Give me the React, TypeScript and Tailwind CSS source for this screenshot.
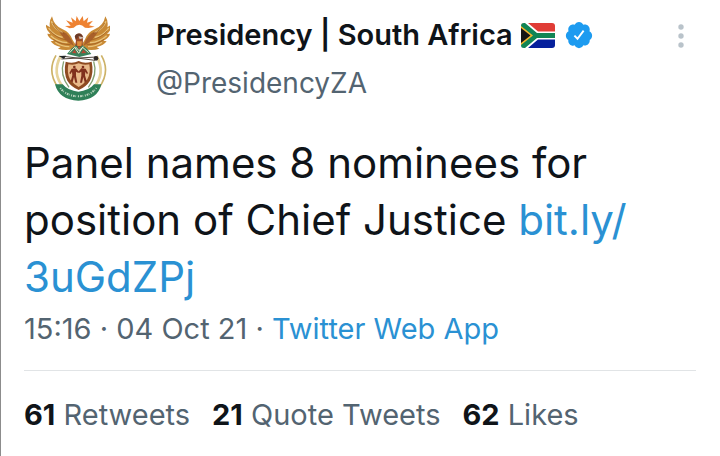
interface StatProps {
  count: number;
  label: string;
}

const stats: StatProps[] = [
  { count: 61, label: 'Retweets' },
  { count: 21, label: 'Quote Tweets' },
  { count: 62, label: 'Likes' },
];

function CoatOfArms() {
  return (
    <svg
      className="h-[86px] w-16"
      viewBox="48 45 192 258"
      role="img"
      aria-label="Coat of arms of South Africa"
    >
      {/* rising sun */}
      <path
        d="M105 78 L122 77 L108 61 L128 68 L123 52 L137 64 L140 48 L148 63 L158 48 L161 64 L175 52 L171 68 L189 62 L177 76 L194 80 L176 84 L165 83 Q148 66 131 83 L119 85 Z"
        fill="#ee8232"
      />
      {/* tusks and wheat */}
      <path d="M78 166 Q50 214 84 262" fill="none" stroke="#cdb267" strokeWidth="5" />
      <path d="M214 166 Q242 214 208 262" fill="none" stroke="#cdb267" strokeWidth="5" />
      <path d="M92 168 Q64 220 101 263" fill="none" stroke="#e6d39a" strokeWidth="8" />
      <path d="M200 168 Q228 220 191 263" fill="none" stroke="#e6d39a" strokeWidth="8" />
      <path d="M101 184 Q88 224 117 262" fill="none" stroke="#83a071" strokeWidth="4" />
      <path d="M191 184 Q204 224 175 262" fill="none" stroke="#83a071" strokeWidth="4" />
      {/* wings */}
      <g id="wing">
        <path
          d="M66 49 Q72 78 98 88 Q120 97 128 120 L138 136 L130 147 Q106 154 84 146 L92 141 Q70 136 62 124 L72 122 Q54 113 52 101 L61 102 Q46 88 48 74 L60 82 Q56 64 66 49 Z"
          fill="#c98a35"
        />
        <path d="M86 92 Q110 94 124 119 L132 138 Q104 124 86 92 Z" fill="#a9602a" />
        <path
          d="M64 64 Q72 87 98 98 M56 84 Q70 106 98 112 M62 107 Q82 126 112 128 M76 127 Q94 140 118 140"
          fill="none"
          stroke="#e9c47c"
          strokeWidth="4"
        />
        <path
          d="M68 69 Q78 91 104 102 M60 92 Q76 113 108 120 M70 118 Q90 134 122 134"
          fill="none"
          stroke="#985620"
          strokeWidth="2"
        />
      </g>
      <use href="#wing" transform="matrix(-1 0 0 1 292 0)" />
      {/* head and breast of the bird */}
      <path d="M134 142 L138 122 Q130 106 142 101 Q157 98 159 112 L158 142 Z" fill="#9c4a25" />
      <path d="M134 110 Q139 98 152 101 L160 110 L146 109 L140 118 Z" fill="#6b3b28" />
      <path d="M146 109 L164 113 L149 118 Z" fill="#cfc3ba" />
      <path d="M141 124 L156 124 L154 138 L142 138 Z" fill="#dd8c3c" />
      {/* protea */}
      <path d="M111 162 L124 146 L138 136 L148 143 L158 136 L171 146 L184 162 L148 171 Z" fill="#39805a" />
      <path
        d="M119 158 L134 142 L146 160 L158 142 L176 158 M136 140 L147 152 L160 140"
        fill="none"
        stroke="#f5ecd2"
        strokeWidth="3"
      />
      <path d="M126 159 L134 149 L140 160 Z M153 160 L160 149 L169 159 Z M143 142 L147 148 L152 142 Z" fill="#b84732" />
      {/* spear and knobkierie */}
      <path d="M94 177 L199 171 M101 169 L195 181" stroke="#51443a" strokeWidth="3" />
      <path d="M86 168 L108 167 L102 177 Z" fill="#222525" />
      <circle cx="198" cy="175" r="7" fill="#2d2725" />
      {/* shield */}
      <path
        d="M107 185 Q128 192 146 183 Q163 192 185 185 Q192 218 180 242 Q169 260 146 270 Q123 260 112 242 Q100 218 107 185 Z"
        fill="#8e4b22"
      />
      <path
        d="M115 193 Q132 197 146 190 Q161 197 178 193 Q183 219 172 238 Q162 252 146 261 Q130 252 120 238 Q110 219 115 193 Z"
        fill="#e8b98a"
      />
      <g fill="#80301d">
        <circle cx="133" cy="201" r="4" />
        <circle cx="159" cy="201" r="4" />
        <path d="M125 206 L138 205 L147 215 L145 219 L138 215 L138 227 L142 248 L136 248 L132 231 L128 247 L122 244 L127 226 L126 215 L121 223 L118 219 Z" />
        <path d="M167 206 L154 205 L145 215 L147 219 L154 215 L154 227 L150 248 L156 248 L160 231 L164 247 L170 244 L165 226 L166 215 L171 223 L174 219 Z" />
      </g>
      {/* motto ribbon */}
      <path
        d="M75 253 L98 253 Q115 273 145 275 Q176 273 192 253 L214 253 Q203 300 145 302 Q87 300 75 253 Z"
        fill="#2f8058"
      />
      <path
        d="M91 264 Q109 288 145 289 Q181 288 199 264"
        fill="none"
        stroke="#b9d3bd"
        strokeWidth="6"
        strokeDasharray="3 3 5 2 2 5"
      />
    </svg>
  );
}

function Flag() {
  return (
    <svg
      className="h-[25px] w-[34px] shrink-0"
      viewBox="0 0 34 25"
      role="img"
      aria-label="Flag of South Africa"
    >
      <clipPath id="flag-shape">
        <rect width="34" height="25" rx="3" />
      </clipPath>
      <g clipPath="url(#flag-shape)">
        <path d="M0 0H34V12H0Z" fill="#e03c36" />
        <path d="M0 12H34V25H0Z" fill="#06209c" />
        <path d="M0 0H7L17 8.500H34V16.500H17L7 25H0Z" fill="#fff" />
        <path d="M0 0H4L16 10H34V15H16L4 25H0Z" fill="#118555" />
        <path d="M0 3L12 12.500L0 22Z" fill="#f5b52e" />
        <path d="M0 5L9.500 12.500L0 20Z" fill="#151515" />
      </g>
    </svg>
  );
}

function VerifiedBadge() {
  return (
    <svg
      className="h-[30px] w-[30px] shrink-0"
      viewBox="0 0 24 24"
      role="img"
      aria-label="Verified account"
    >
      <path
        d="M22.5 12.500c0-1.580-.875-2.950-2.148-3.600.154-.435.238-.905.238-1.400 0-2.210-1.710-3.998-3.818-3.998-.47 0-.920.084-1.336.250C14.818 2.415 13.510 1.500 12 1.500s-2.816.917-3.437 2.250c-.415-.165-.866-.250-1.336-.250-2.110 0-3.818 1.790-3.818 4 0 .494.083.964.237 1.400-1.272.650-2.147 2.018-2.147 3.600 0 1.495.782 2.798 1.942 3.486-.020.170-.032.340-.032.514 0 2.210 1.708 4 3.818 4 .470 0 .920-.086 1.335-.250.620 1.334 1.926 2.250 3.437 2.250 1.512 0 2.818-.916 3.437-2.250.415.163.865.248 1.336.248 2.110 0 3.818-1.790 3.818-4 0-.174-.012-.344-.033-.513 1.158-.687 1.943-1.990 1.943-3.484z"
        fill="#1d9bf0"
      />
      <path d="M8.300 12.500L10.800 15L15.700 8.500" fill="none" stroke="#fff" strokeWidth="1.500" />
    </svg>
  );
}

function Stat({ count, label }: StatProps) {
  return (
    <a href="#" className="text-[#536471]">
      <span className="font-bold text-[#0f1419]">{count}</span> {label}
    </a>
  );
}

export default function App() {
  return (
    <article className="min-h-screen border-l border-[#8c8c8c] bg-white pt-[15px] pr-6 pl-[23px] font-['Inter',sans-serif] text-[#0f1419]">
      <header className="flex items-start">
        <a href="#" className="mr-[46px] ml-[22px] shrink-0">
          <CoatOfArms />
        </a>
        <div className="min-w-0 flex-1">
          <div className="flex h-10 items-center">
            <h1 className="text-[29px] font-semibold whitespace-nowrap">
              Presidency | South Africa
            </h1>
            <div className="ml-2 flex items-center gap-[9px]">
              <Flag />
              <VerifiedBadge />
            </div>
          </div>
          <a href="#" className="mt-2 block text-[28px] leading-10 text-[#536471]">
            @PresidencyZA
          </a>
        </div>
        <button type="button" aria-label="More" className="mt-[9px] px-3">
          <svg className="h-6 w-[6px]" viewBox="0 0 6 24" fill="#b9c3ca">
            <circle cx="3" cy="3" r="2.700" />
            <circle cx="3" cy="12" r="2.700" />
            <circle cx="3" cy="21" r="2.700" />
          </svg>
        </button>
      </header>

      <p className="mt-[31px] text-[42px] leading-[57px]">
        Panel names 8 nominees for position of Chief Justice{' '}
        <a href="#" className="text-[#2a91d3]">
          bit.ly/
          <wbr />
          3uGdZPj
        </a>
      </p>

      <div className="mt-1 text-[29px] leading-10 text-[#536471]">
        <time dateTime="2021-10-04T15:16">15:16 · 04 Oct 21</time> ·{' '}
        <a href="#" className="text-[#2a91d3]">
          Twitter Web App
        </a>
      </div>

      <div className="mt-[21px] flex flex-wrap gap-x-[22px] border-t border-[#e1e4e6] pt-6 text-[29px] leading-10">
        {stats.map((stat) => (
          <Stat key={stat.label} {...stat} />
        ))}
      </div>
    </article>
  );
}
